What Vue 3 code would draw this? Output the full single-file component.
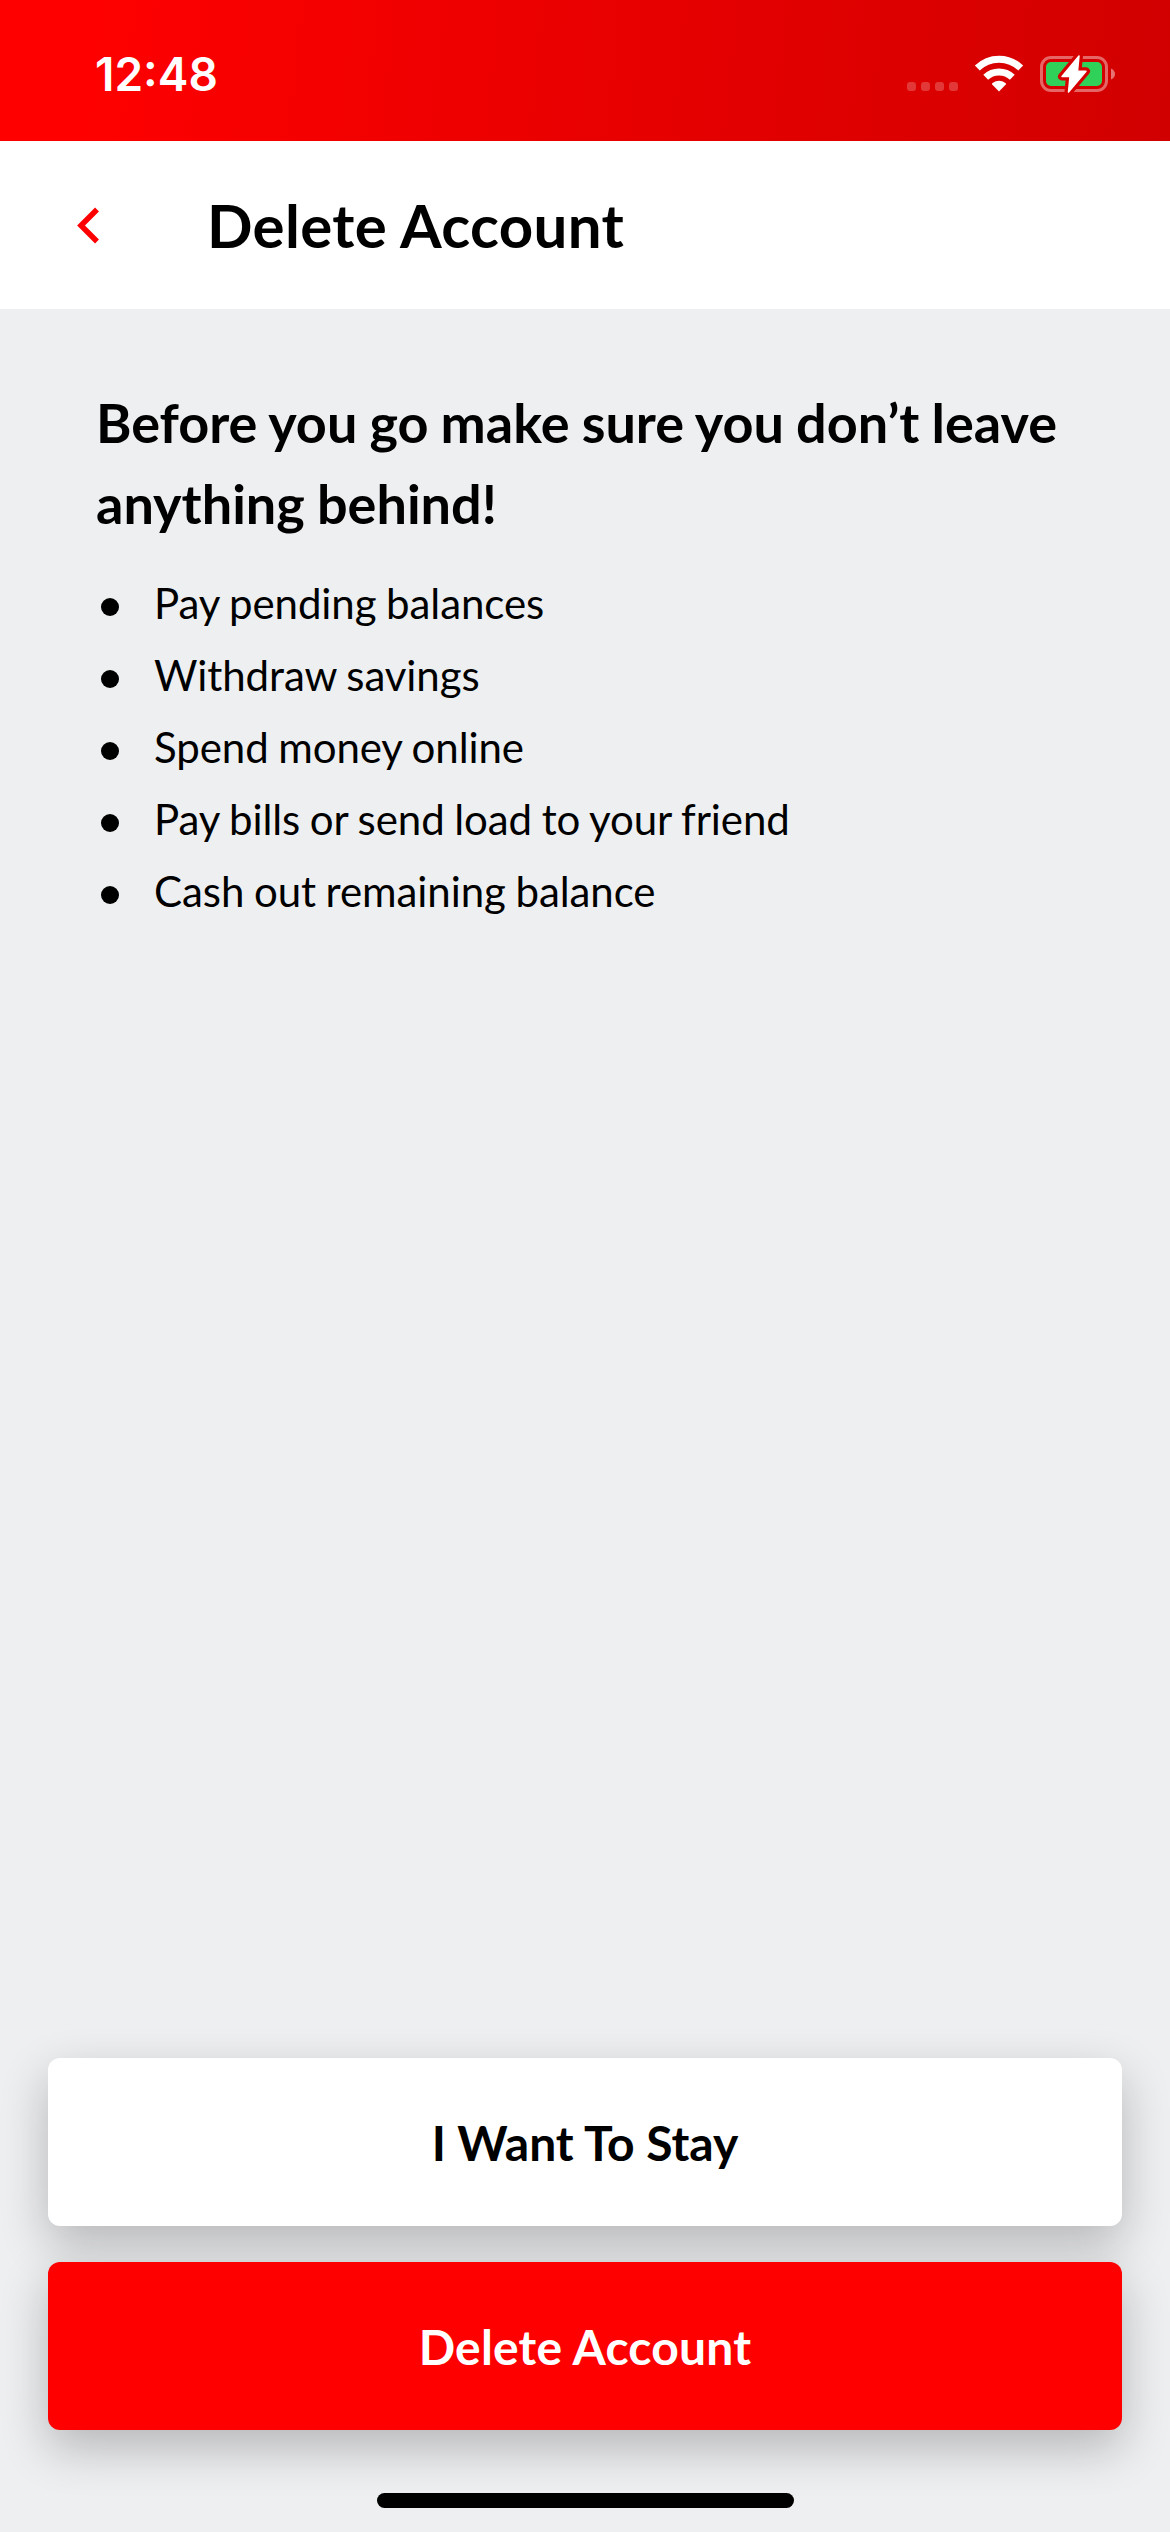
<script setup>
const tips = [
  'Pay pending balances',
  'Withdraw savings',
  'Spend money online',
  'Pay bills or send load to your friend',
  'Cash out remaining balance',
]
</script>

<template>
  <div class="screen">
    <div class="status-bar">
      <span class="time">12:48</span>
      <svg class="status-icons" width="210" height="40" viewBox="906 54 210 40" aria-hidden="true">
        <g fill="#fff" fill-opacity="0.22">
          <rect x="907" y="82" width="9" height="9" rx="3" />
          <rect x="921" y="82" width="9" height="9" rx="3" />
          <rect x="935" y="82" width="9" height="9" rx="3" />
          <rect x="949" y="82" width="9" height="9" rx="3" />
        </g>
        <g fill="none" stroke="#fff" stroke-width="7">
          <path d="M977.3 68.1A31 31 0 0 1 1020.7 68.1" />
          <path d="M985.7 77.2A19.3 19.3 0 0 1 1012.3 77.2" />
        </g>
        <path d="M999 91.5L992.2 84.6Q991.6 83.8 992.5 83.1Q999 78.6 1005.5 83.1Q1006.4 83.8 1005.8 84.6Z" fill="#fff" />
        <rect x="1041.5" y="57.5" width="65" height="33" rx="9.5" fill="none" stroke="#fff" stroke-opacity="0.4" stroke-width="3" />
        <path d="M1111 68.5Q1115 70.5 1115 74Q1115 77.5 1111 79.5Z" fill="#fff" fill-opacity="0.45" />
        <rect x="1046" y="62" width="56" height="24" rx="5" fill="#30d158" />
        <path class="bolt-gap" d="M1079 56L1062 76.5H1070L1068.5 92L1086 71.2H1077.5Z" />
        <path class="bolt" d="M1079 56L1062 76.5H1070L1068.5 92L1086 71.2H1077.5Z" />
      </svg>
    </div>

    <header class="nav">
      <svg class="back" width="23" height="37" viewBox="0 0 23 37" aria-label="Back">
        <path d="M20 2.5L4 18.5L20 34.5" fill="none" stroke="#f00" stroke-width="5.5" />
      </svg>
      <h1>Delete Account</h1>
    </header>

    <main>
      <h2>Before you go make sure you don’t leave anything behind!</h2>
      <ul>
        <li v-for="tip in tips" :key="tip">{{ tip }}</li>
      </ul>
    </main>

    <footer>
      <button class="stay">I Want To Stay</button>
      <button class="delete">Delete Account</button>
      <div class="home-indicator"></div>
    </footer>
  </div>
</template>

<style>
body {
  margin: 0;
}
</style>

<style scoped>
.screen {
  box-sizing: border-box;
  width: 1170px;
  height: 2532px;
  display: flex;
  flex-direction: column;
  overflow: hidden;
  background: #eeeff1;
  color: #000;
  font-family: Lato, sans-serif;
}
.status-bar {
  box-sizing: border-box;
  height: 141px;
  flex: none;
  display: flex;
  align-items: flex-start;
  justify-content: space-between;
  padding: 54px 54px 0 95px;
  background: linear-gradient(96deg, #f00 0%, #fe0000 8%, #d10000 100%);
}
.time {
  margin-top: -1px;
  color: #fff;
  font: 600 46px/42px Inter, sans-serif;
}
.nav {
  box-sizing: border-box;
  height: 168px;
  flex: none;
  display: flex;
  align-items: center;
  padding-left: 77px;
  background: #fff;
}
.back {
  display: block;
}
h1 {
  margin: 0 0 0 107px;
  font-size: 60px;
  line-height: 72px;
  font-weight: 700;
  letter-spacing: 0.35px;
}
main {
  flex: 1;
  padding: 73px 90px 0 96px;
}
h2 {
  margin: 0;
  font-size: 54px;
  line-height: 81px;
  font-weight: 700;
  word-spacing: -1px;
}
ul {
  margin: 23px 0 0;
  padding: 0;
  list-style: none;
}
li {
  display: flex;
  align-items: center;
  font-size: 42px;
  line-height: 72px;
  letter-spacing: -0.08px;
  word-spacing: -1px;
}
li::before {
  content: '';
  width: 18px;
  height: 18px;
  margin: 7px 35px 0 5px;
  border-radius: 50%;
  background: #000;
}
footer {
  display: flex;
  flex-direction: column;
  padding: 0 48px 24px;
}
button {
  height: 168px;
  margin: 0 0 36px;
  padding: 2px 0 0;
  border: 0;
  border-radius: 12px;
  font: 700 48px/58px Lato, sans-serif;
  box-shadow: 0 18px 48px rgba(0, 0, 0, 0.24);
}
.stay {
  background: #fff;
  color: #000;
}
.delete {
  margin-bottom: 63px;
  background: #f00;
  color: #fff;
  letter-spacing: 0.2px;
}
.home-indicator {
  align-self: center;
  width: 417px;
  height: 15px;
  border-radius: 8px;
  background: #000;
}
.bolt-gap {
  fill: #d60000;
  stroke: #d60000;
  stroke-width: 8;
  stroke-linejoin: round;
}
.bolt {
  fill: #fff;
  stroke: #fff;
  stroke-width: 1.5;
  stroke-linejoin: round;
}
</style>
